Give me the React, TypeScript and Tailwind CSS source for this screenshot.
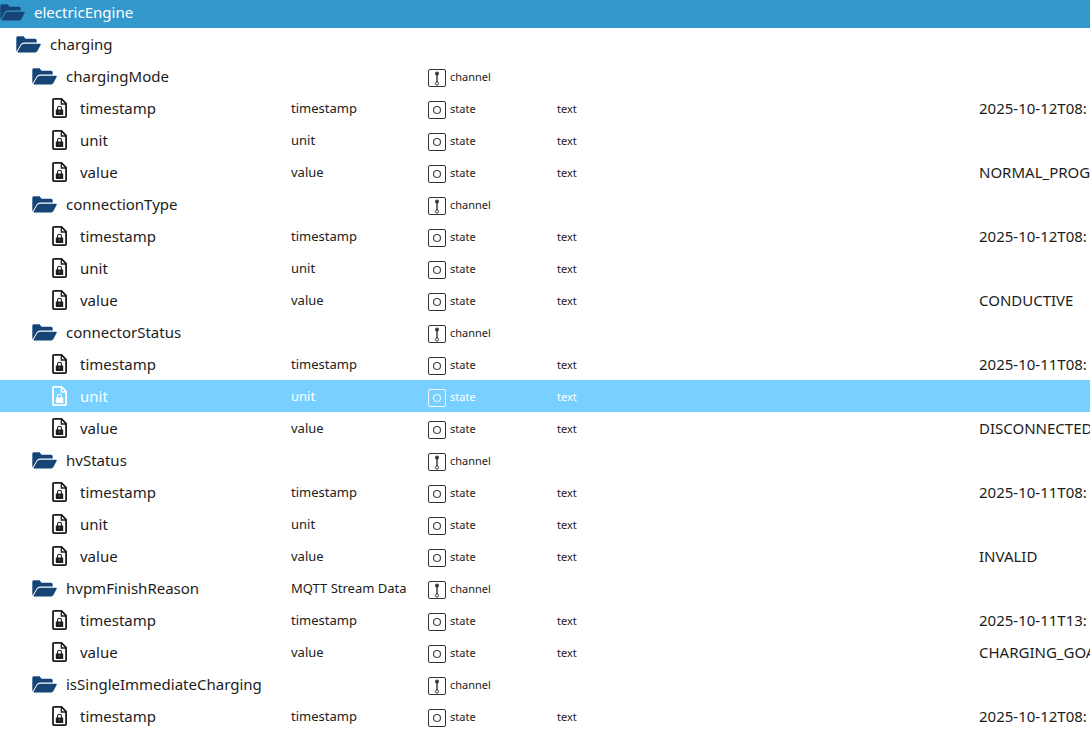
import React from "react";

type Kind = "root" | "folder" | "channel" | "state";

interface TreeRow {
  name: string;
  kind: Kind;
  description?: string;
  value?: string;
  active?: boolean;
}

const state = (name: string, value = "", active = false): TreeRow => ({
  name,
  kind: "state",
  description: name,
  value,
  active,
});
const channel = (name: string, description = ""): TreeRow => ({ name, kind: "channel", description });

const rows: TreeRow[] = [
  { name: "electricEngine", kind: "root" },
  { name: "charging", kind: "folder" },
  channel("chargingMode"),
  state("timestamp", "2025-10-12T08:"),
  state("unit"),
  state("value", "NORMAL_PROG"),
  channel("connectionType"),
  state("timestamp", "2025-10-12T08:"),
  state("unit"),
  state("value", "CONDUCTIVE"),
  channel("connectorStatus"),
  state("timestamp", "2025-10-11T08:"),
  state("unit", "", true),
  state("value", "DISCONNECTED"),
  channel("hvStatus"),
  state("timestamp", "2025-10-11T08:"),
  state("unit"),
  state("value", "INVALID"),
  channel("hvpmFinishReason", "MQTT Stream Data"),
  state("timestamp", "2025-10-11T13:"),
  state("value", "CHARGING_GOA"),
  channel("isSingleImmediateCharging"),
  state("timestamp", "2025-10-12T08:"),
];

function FolderIcon() {
  return (
    <svg viewBox="0 0 25 17" className="h-[17px] w-[25px] shrink-0 fill-[#164477]" aria-hidden="true">
      <path d="M1.800 0.300H7.600L9.600 2.700H19Q20.700 2.700 20.700 4.400V6.600H8Q5.800 6.600 4.600 8.600L0.700 15.300Q0.300 15 0.300 14V1.800Q0.300 0.300 1.800 0.300z" />
      <path d="M7.700 7.700H24Q25.200 7.700 24.600 8.900L21.400 14.900Q20.600 16.500 18.800 16.500H2.200Q1 16.500 1.600 15.400L5.200 9.200Q6.100 7.700 7.700 7.700z" />
    </svg>
  );
}

function LockedFileIcon() {
  return (
    <svg viewBox="0 0 15 20" className="h-5 w-[15px] shrink-0" fill="none" stroke="currentColor" aria-hidden="true">
      <path d="M2 0.900H9.500l4.600 4.600v12.600a1 1 0 0 1-1 1H2a1 1 0 0 1-1-1V1.900A1 1 0 0 1 2 0.900z" strokeWidth="1.800" />
      <path d="M9.300 1v5H14" strokeWidth="1.300" />
      <rect x="3.800" y="11.500" width="7.400" height="5.500" rx="0.600" fill="currentColor" stroke="none" />
      <path d="M5.500 12V10.300a2 2 0 0 1 4 0V12" strokeWidth="1.100" />
      <circle cx="7.500" cy="14" r="0.700" className="fill-white" fillOpacity="0.500" stroke="none" />
    </svg>
  );
}

function TypeIcon({ kind }: { kind: Kind }) {
  return (
    <svg viewBox="0 0 18 18" className="h-[18px] w-[18px] shrink-0" fill="none" stroke="currentColor" aria-hidden="true">
      <rect x="0.500" y="0.500" width="17" height="17" rx="1.500" strokeOpacity="0.900" />
      {kind === "channel" ? (
        <>
          <path d="M9 5v8" strokeWidth="1.800" strokeOpacity="0.700" />
          <circle cx="9" cy="4.600" r="2" fill="currentColor" stroke="none" fillOpacity="0.850" />
          <circle cx="9" cy="14.500" r="1.600" strokeOpacity="0.850" />
        </>
      ) : (
        <circle cx="9" cy="9" r="3.500" strokeWidth="1.200" strokeOpacity="0.800" />
      )}
    </svg>
  );
}

const indent: Record<Kind, string> = {
  root: "pl-0 gap-[9px]",
  folder: "pl-4 gap-[9px]",
  channel: "pl-8 gap-[9px]",
  state: "pl-[52px] gap-[13px]",
};

function Row({ row }: { row: TreeRow }) {
  const { kind } = row;
  const tone =
    kind === "root" ? "h-7 bg-[#3399cc] text-white" : row.active ? "h-8 bg-[#77d0ff] text-white" : "h-8 text-[#1c1c1c]";
  return (
    <tr className={tone}>
      <td className="p-0">
        <div className={`flex items-center ${kind === "root" ? "pb-1" : ""} ${indent[kind]}`}>
          {kind === "state" ? <LockedFileIcon /> : <FolderIcon />}
          <span className="text-[15px] leading-6">{row.name}</span>
        </div>
      </td>
      <td className="p-0 text-[13px] leading-6">{row.description}</td>
      <td className="p-0">
        {(kind === "channel" || kind === "state") && (
          <div className="flex items-center gap-1 pt-1">
            <TypeIcon kind={kind} />
            <span className="pb-0.5 text-[11px] leading-5">{kind}</span>
          </div>
        )}
      </td>
      <td className="p-0 pt-0.5 text-[11px] leading-5">{kind === "state" ? "text" : ""}</td>
      <td className="overflow-hidden p-0 text-[15px] leading-6 whitespace-nowrap">{row.value}</td>
    </tr>
  );
}

export default function App() {
  return (
    <main className="h-screen overflow-hidden bg-white font-['Noto_Sans','Open_Sans',sans-serif]">
      <table className="w-full table-fixed border-collapse" aria-label="Objects">
        <colgroup>
          <col className="w-[291px]" />
          <col className="w-[137px]" />
          <col className="w-[129px]" />
          <col className="w-[422px]" />
          <col />
        </colgroup>
        <tbody>
          {rows.map((row, i) => (
            <Row key={i} row={row} />
          ))}
        </tbody>
      </table>
    </main>
  );
}
